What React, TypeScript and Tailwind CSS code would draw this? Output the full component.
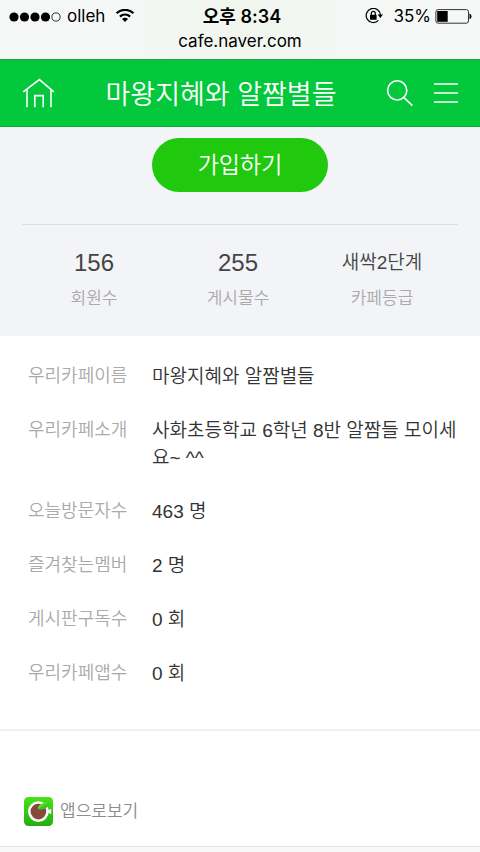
const stats = [
  { label: "회원수", value: "156", size: "text-2xl" },
  { label: "게시물수", value: "255", size: "text-2xl" },
  { label: "카페등급", value: "새싹2단계", size: "text-[19px]" },
];

const details = [
  { label: "우리카페이름", value: "마왕지혜와 알짬별들" },
  { label: "우리카페소개", value: "사화초등학교 6학년 8반 알짬들 모이세요~ ^^" },
  { label: "오늘방문자수", value: "463 명" },
  { label: "즐겨찾는멤버", value: "2 명" },
  { label: "게시판구독수", value: "0 회" },
  { label: "우리카페앱수", value: "0 회" },
];

export default function App() {
  return (
    <div className="flex min-h-screen flex-col bg-white font-['Liberation_Sans','Noto_Sans_CJK_KR',sans-serif] font-[350] text-[#333333]">
      <StatusBar />
      <CafeHeader />
      <main className="flex-1">
        <CafeSummary />
        <CafeDetails />
      </main>
      <AppFooter />
    </div>
  );
}

function StatusBar() {
  return (
    <div className="bg-[#f6f7f7] bg-linear-to-r from-[#f6f7f7] from-25% via-[#f0f6ee] to-[#f6f7f7] to-75% px-2 pt-1 pb-1.5 font-['Inter','Noto_Sans_CJK_KR',sans-serif] font-normal text-black">
      <div className="grid h-6 grid-cols-[1fr_auto_1fr] items-center text-[17px]">
        <div className="flex items-center gap-1.5">
          <svg aria-hidden="true" className="h-3 w-[53px]" viewBox="0 0 53 12">
            <circle cx="6" cy="6" r="4.6" />
            <circle cx="16.5" cy="6" r="4.6" />
            <circle cx="27" cy="6" r="4.6" />
            <circle cx="37.5" cy="6" r="4.6" />
            <circle cx="48" cy="6" r="4.1" fill="none" stroke="#000" strokeWidth="0.8" />
          </svg>
          <span>olleh</span>
          <svg aria-hidden="true" className="ml-1 h-[15px] w-5" viewBox="0 0 20 15" fill="none" stroke="#000" strokeWidth="2.2">
            <path d="M1.6 4.3a12 12 0 0 1 16.8 0" />
            <path d="M4.9 7.6a7.3 7.3 0 0 1 10.2 0" />
            <path d="M7 10.1a4.4 4.4 0 0 1 6 0L10 13z" fill="#000" stroke="none" />
          </svg>
        </div>
        <span className="pl-1 text-lg leading-6 font-semibold">오후 8:34</span>
        <div className="flex items-center justify-end gap-1">
          <svg aria-hidden="true" className="mr-1.5 h-[18px] w-[18px]" viewBox="0 0 18 18" fill="none" stroke="#000">
            <path d="M13.4 12.4A7.1 7.1 0 1 1 15.4 7.4" strokeWidth="1.2" />
            <path d="M12.6 6.6h5.4l-2.7 3.4z" fill="#000" stroke="none" />
            <rect x="5" y="6.8" width="6.6" height="5" rx="0.6" fill="#000" stroke="none" />
            <path d="M6.3 7.2V5.4a2 2 0 0 1 4 0v1.8" strokeWidth="1.2" />
          </svg>
          <span>35%</span>
          <svg aria-hidden="true" className="h-4 w-[37px]" viewBox="0 0 37 16">
            <rect x="0.9" y="0.6" width="32.6" height="13.6" rx="2.2" fill="none" stroke="#333" strokeWidth="1" />
            <rect x="2.2" y="2" width="10.5" height="10.8" />
            <path d="M34.5 4.6q2 .6 2 2.8t-2 2.8z" />
          </svg>
        </div>
      </div>
      <p className="pt-0.5 text-center text-[17px] leading-[23px]">cafe.naver.com</p>
    </div>
  );
}

function CafeHeader() {
  return (
    <header className="flex h-[68px] items-center justify-between border-y border-t-[#2f9a4b] border-b-[#04ab36] bg-[#04c83c] px-[22px] text-white">
      <a href="#home" aria-label="홈">
        <svg aria-hidden="true" className="h-8 w-[34px]" viewBox="0 0 34 32" fill="none" stroke="currentColor" strokeWidth="1.6">
          <path d="M1.2 14.8 17.4 2.6 31.8 14.8" />
          <path d="M5 12v18.2M29 12v18.2" />
          <path d="M12.8 30.2V18.6h8.4v11.6" />
        </svg>
      </a>
      <h1 className="pt-1 text-[27px] leading-10 whitespace-nowrap">마왕지혜와 알짬별들</h1>
      <div className="flex items-center gap-5">
        <button type="button" aria-label="검색">
          <svg aria-hidden="true" className="h-7 w-7" viewBox="0 0 28 28" fill="none" stroke="currentColor" strokeWidth="1.6">
            <circle cx="11.2" cy="11.4" r="9.6" />
            <path d="m18 18.6 8.4 8" />
          </svg>
        </button>
        <button type="button" aria-label="메뉴">
          <svg aria-hidden="true" className="h-6 w-6" viewBox="0 0 24 24" fill="none" stroke="currentColor" strokeWidth="1.6">
            <path d="M0 3h24M0 12h24M0 21h24" />
          </svg>
        </button>
      </div>
    </header>
  );
}

function CafeSummary() {
  return (
    <section className="bg-[#f3f4f7] px-[22px] pt-[11px] pb-[23px]">
      <button
        type="button"
        className="mx-auto block h-[54px] w-44 rounded-full bg-[#20c90e] text-[23px] text-white"
      >
        가입하기
      </button>

      <dl className="mt-8 grid grid-cols-3 border-t border-[#dddee0] pt-[22px] pr-1 text-center">
        {stats.map((stat) => (
          <div key={stat.label} className="flex flex-col-reverse">
            <dt className="mt-1.5 text-[17px] leading-7 text-[#aaaaaa]">{stat.label}</dt>
            <dd className={`flex h-8 items-center justify-center text-[#444444] ${stat.size}`}>{stat.value}</dd>
          </div>
        ))}
      </dl>
    </section>
  );
}

function CafeDetails() {
  return (
    <dl className="flex flex-col gap-[27px] pt-[27px] pr-5 pb-[41px] pl-7 leading-[27px]">
      {details.map((item) => (
        <div key={item.label} className="flex">
          <dt className="w-[124px] shrink-0 text-lg leading-[27px] text-[#aaaaaa]">{item.label}</dt>
          <dd className="text-[19px] break-all">{item.value}</dd>
        </div>
      ))}
    </dl>
  );
}

function AppFooter() {
  return (
    <footer className="border-t-2 border-[#f0f0f1]">
      <a href="#app" className="flex items-center gap-[7px] px-6 pt-[65px] pb-5 text-[17px] leading-[30px] text-[#8c8c8c]">
        <CafeLogo />
        <span className="pt-0.5 leading-7">앱으로보기</span>
      </a>
      <div className="h-1.5 border-t border-[#e2e2e2] bg-[#f8f8f8]" />
    </footer>
  );
}

function CafeLogo() {
  return (
    <svg aria-hidden="true" className="h-[29px] w-[29px]" viewBox="0 0 29 29">
      <defs>
        <linearGradient id="logo-bg" x2="0" y2="1">
          <stop stopColor="#46e31c" />
          <stop offset="1" stopColor="#24ad10" />
        </linearGradient>
      </defs>
      <rect width="29" height="29" rx="4.5" fill="url(#logo-bg)" />
      <path d="M23 13h1.6l2.6-1v5l-2.6-1H23z" fill="#fff" />
      <circle cx="14.4" cy="14.6" r="9.1" fill="#86493a" stroke="#f7f7f5" strokeWidth="2.6" />
      <path d="M13.8 12.4C14.6 7.4 18 5.8 25.4 5.8 24.4 10.8 20.6 13.4 13.8 12.4z" fill="#3cc424" />
      <path d="M13.8 12C14.6 7.4 18 5.8 25.4 5.8 21 7.6 17.4 9.4 13.8 12z" fill="#5bdf35" />
    </svg>
  );
}
